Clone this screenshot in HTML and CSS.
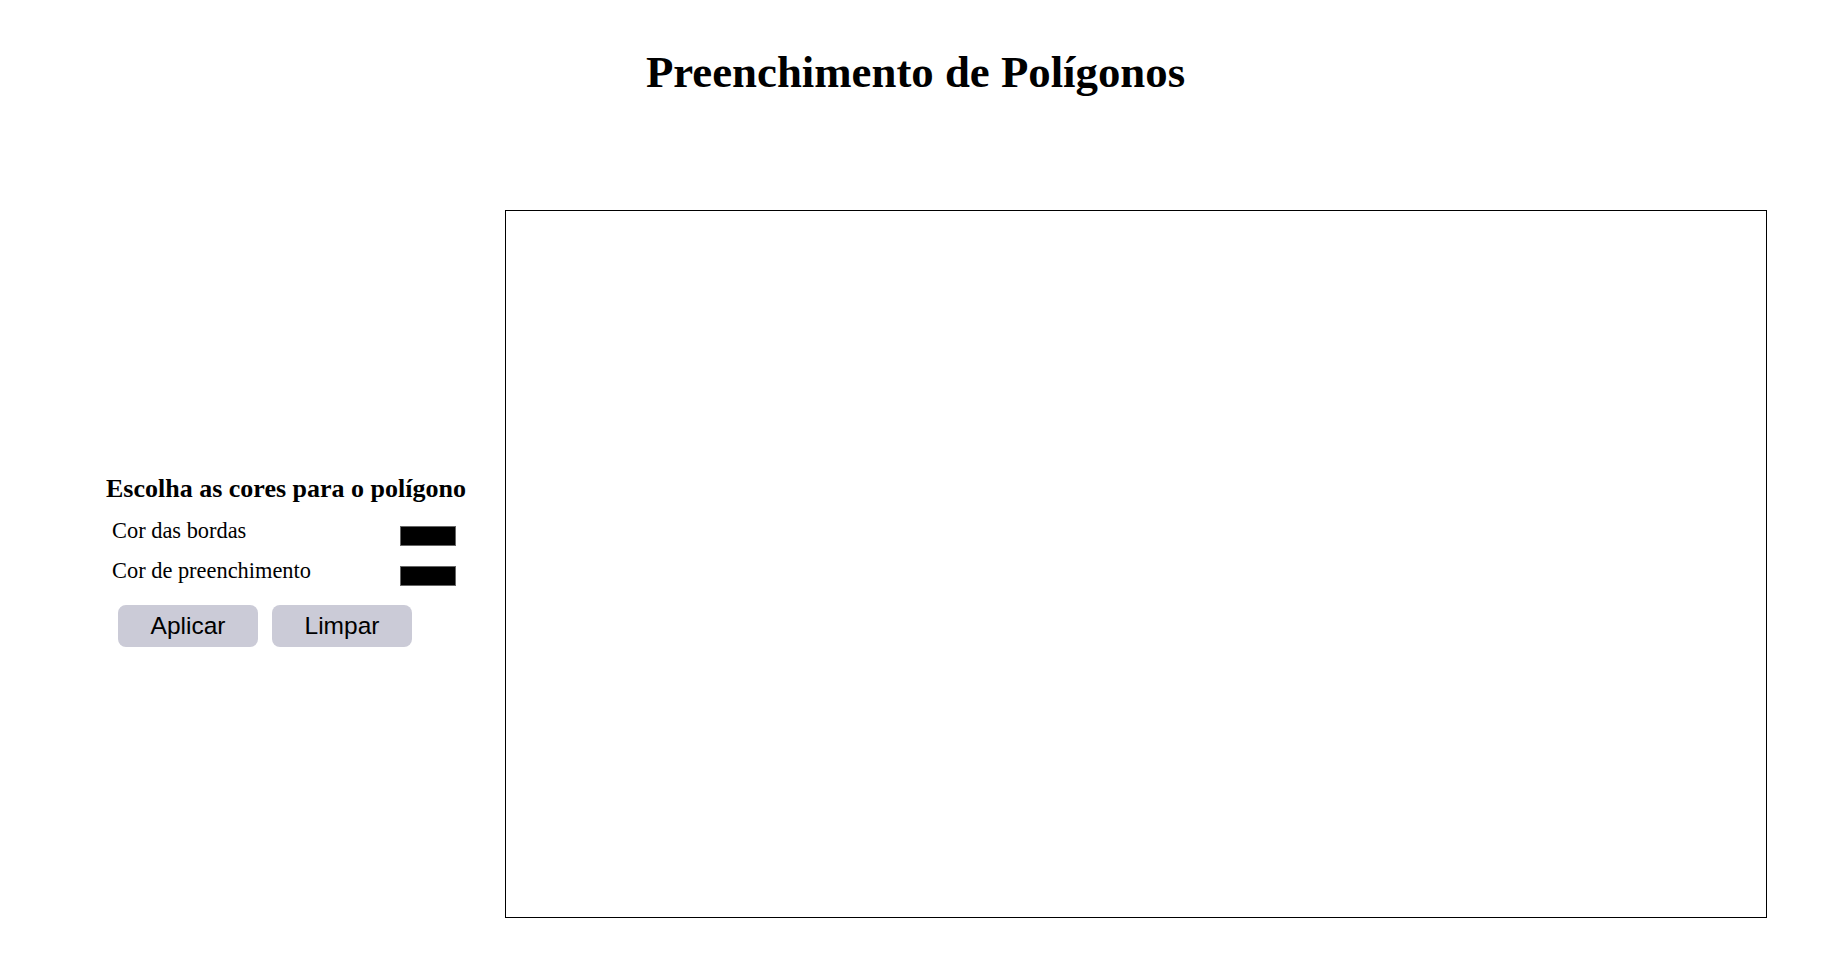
FILE: index.html
```html
<!DOCTYPE html>
<html lang="pt">
<head>
<meta charset="utf-8">
<title>Preenchimento de Polígonos</title>
<link rel="stylesheet" href="styles.css">
</head>
<body>
<h1 class="title">Preenchimento de Polígonos</h1>
<main class="layout">
  <section class="panel">
    <h3 class="panel-title">Escolha as cores para o polígono</h3>
    <div class="row">
      <span class="label">Cor das bordas</span>
      <span class="swatch"></span>
    </div>
    <div class="row">
      <span class="label">Cor de preenchimento</span>
      <span class="swatch"></span>
    </div>
    <div class="buttons">
      <button class="btn">Aplicar</button>
      <button class="btn">Limpar</button>
    </div>
  </section>
  <div class="canvas"></div>
</main>
</body>
</html>
```
FILE: styles.css
```css
html, body {
  margin: 0;
  padding: 0;
  background: #ffffff;
  color: #000000;
  font-family: "Liberation Serif", "Times New Roman", serif;
}
.title {
  margin: 46px 0 0 0;
  font-size: 44.8px;
  line-height: 53px;
  font-weight: bold;
  text-align: center;
}
.layout {
  display: flex;
  align-items: center;
  gap: 38px;
  margin-top: 111px;
  padding-left: 106px;
}
.panel {
  width: 361px;
  display: flex;
  flex-direction: column;
  padding-bottom: 8px;
}
.panel-title {
  margin: 0 0 14px 0;
  font-size: 26px;
  line-height: 30px;
  font-weight: bold;
  white-space: nowrap;
}
.row {
  display: flex;
  justify-content: space-between;
  align-items: flex-start;
  padding: 0 11px 0 6px;
  margin-bottom: 12px;
}
.label {
  font-size: 22.4px;
  line-height: 26px;
}
.swatch {
  width: 54px;
  height: 18px;
  margin-top: 8px;
  background: #000000;
  border: 1px solid #666666;
}
.buttons {
  display: flex;
  gap: 14px;
  margin: 7px 0 0 12px;
}
.btn {
  width: 140px;
  height: 42px;
  border: none;
  border-radius: 8px;
  background: #cbcbd7;
  color: #000000;
  font-family: "Liberation Sans", Arial, sans-serif;
  font-size: 24.5px;
  padding: 0;
}
.canvas {
  width: 1260px;
  height: 706px;
  border: 1px solid #000000;
  flex: none;
}
```
